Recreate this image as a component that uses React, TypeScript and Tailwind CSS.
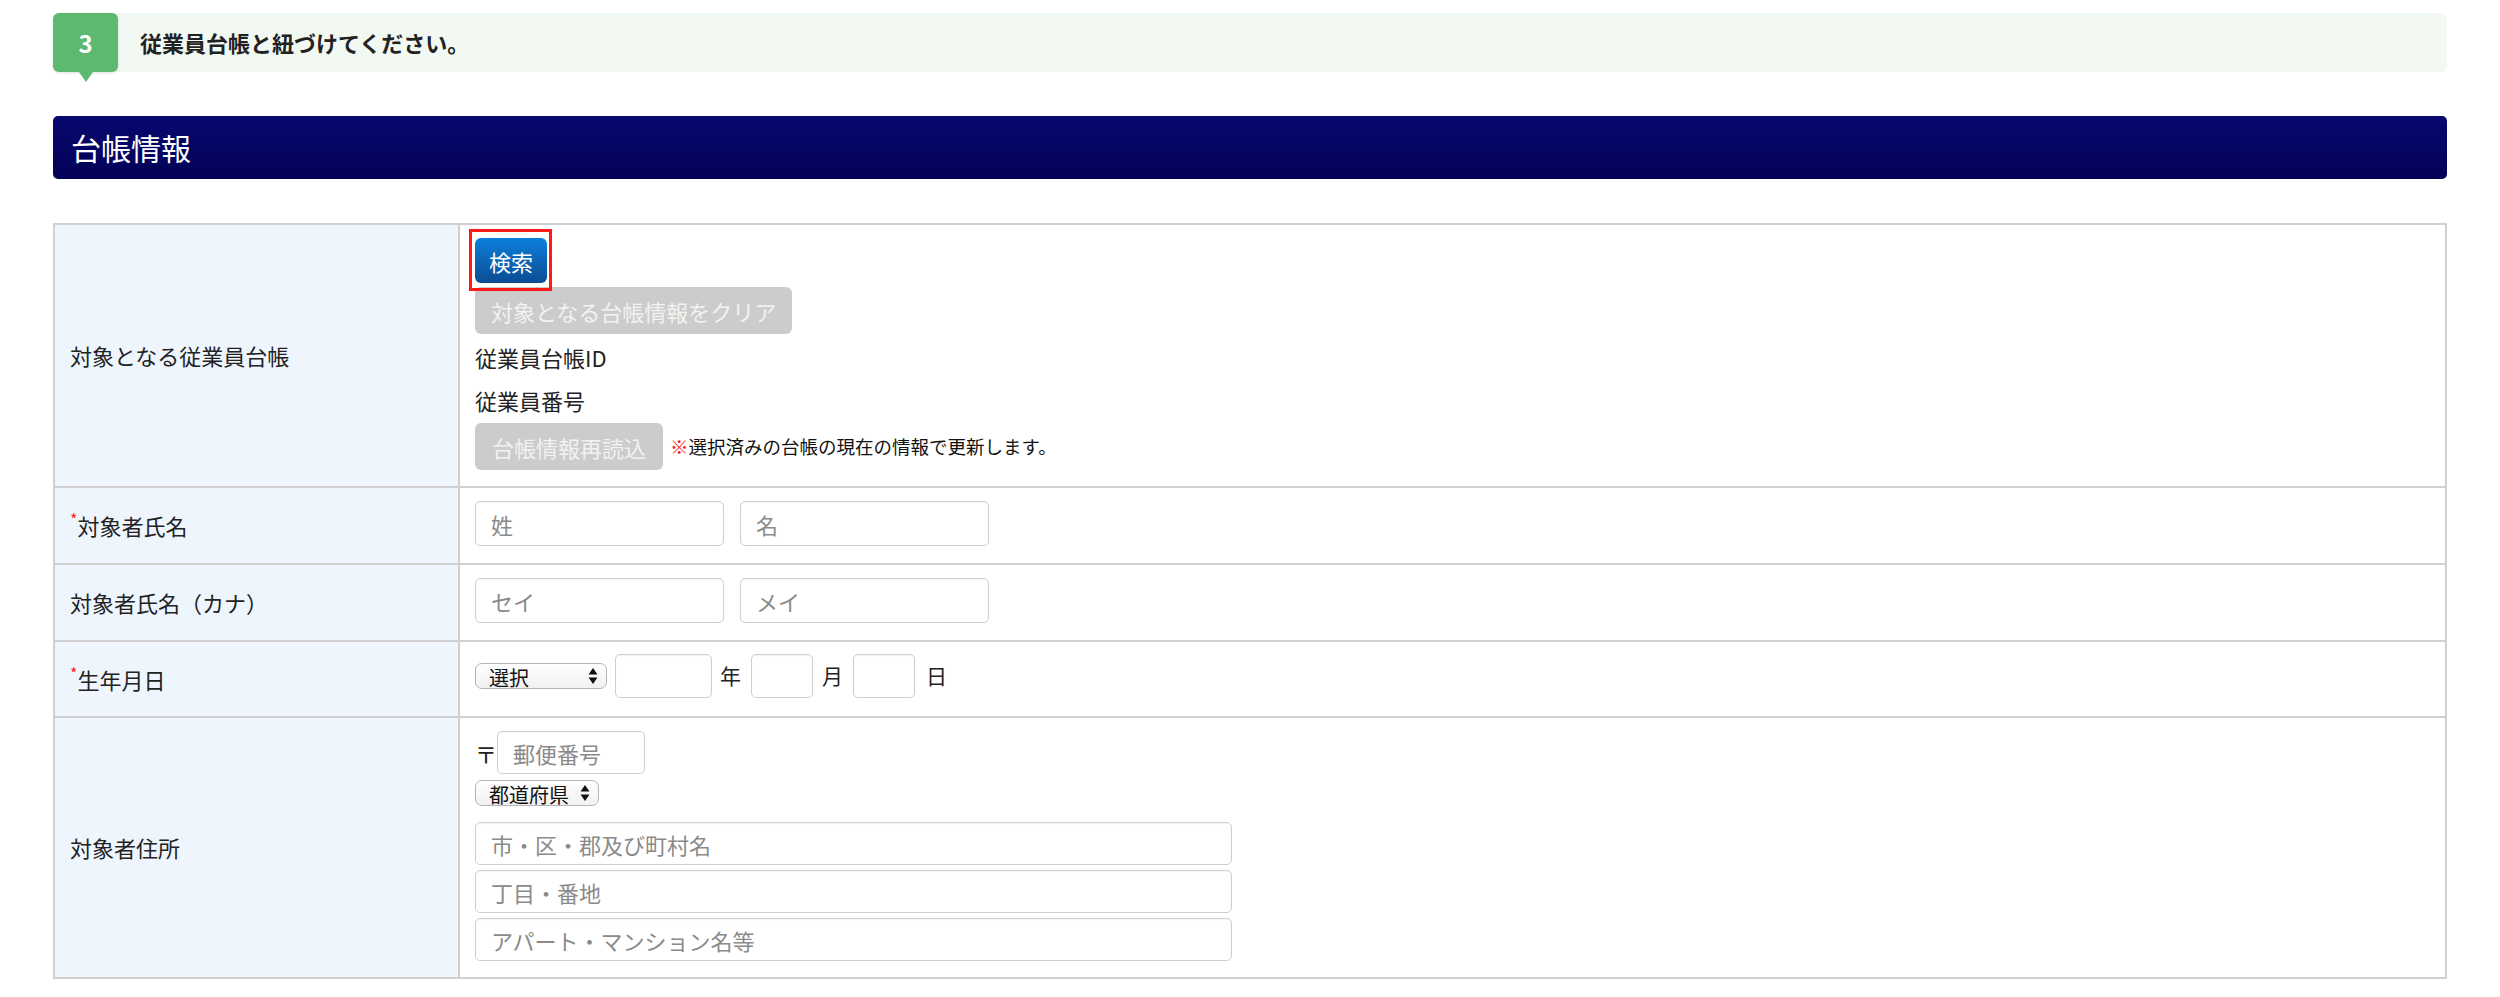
import React from "react";

const font = { fontFamily: '"Noto Sans CJK JP", "Noto Sans", sans-serif' };

function Arrows() {
  return (
    <svg width="10" height="18" viewBox="0 0 10 18" className="shrink-0">
      <polygon points="5,1 9.5,7.5 0.5,7.5" fill="#111" />
      <polygon points="5,17 9.5,10.5 0.5,10.5" fill="#111" />
    </svg>
  );
}

function FakeSelect({ label, w }: { label: string; w: string }) {
  return (
    <div
      className={`${w} h-[26px] rounded-[7px] border border-[#b5b5b5] bg-gradient-to-b from-[#ffffff] to-[#f1f1f1] flex items-center justify-between pl-[13px] pr-[8px]`}
    >
      <span className="text-[20px] leading-none pt-[3px] text-[#111] whitespace-nowrap">{label}</span>
      <Arrows />
    </div>
  );
}

function Input({ w, ph, h = "h-[45px]" }: { w: string; ph?: string; h?: string }) {
  return (
    <input
      placeholder={ph}
      className={`${w} ${h} rounded-[5px] border-[1.5px] border-[#cfcfcf] bg-white px-[15px] text-[22px] text-[#333] placeholder:text-[#8a8a8a] outline-none shadow-[inset_0_1px_1px_rgba(0,0,0,0.04)]`}
      style={font}
    />
  );
}

function Req() {
  return <span className="text-[#ff2020] text-[16px] align-top relative top-[-2px]">*</span>;
}

function Row({
  label,
  children,
  first,
  contentClass,
}: {
  label: React.ReactNode;
  children: React.ReactNode;
  first?: boolean;
  contentClass: string;
}) {
  return (
    <div className={`flex ${first ? "" : "border-t-2 border-[#d0d0d0]"}`}>
      <div className="w-[405px] shrink-0 bg-[#eef5fd] border-r-2 border-[#d0d0d0] flex items-center pl-[15px] text-[22px] text-[#222]">
        {label}
      </div>
      <div className={`flex-1 pl-[15px] ${contentClass}`}>{children}</div>
    </div>
  );
}

export default function App() {
  return (
    <div className="w-[2500px] min-h-[997px] bg-white pt-[13px] px-[53px] text-[#222]" style={font}>
      {/* Step bar */}
      <div className="h-[59px] flex items-center bg-[#f2f9f3] rounded-[6px]">
        <div className="relative w-[65px] h-full bg-[#5db96f] rounded-[6px] flex items-center justify-center text-white font-bold text-[24px] shadow-[0_1px_3px_rgba(0,0,0,0.12)]">
          3
          <div className="absolute left-1/2 -translate-x-1/2 top-full w-0 h-0 border-l-[7px] border-r-[7px] border-t-[10px] border-l-transparent border-r-transparent border-t-[#5db96f]" />
        </div>
        <div className="ml-[22px] font-bold text-[22px] text-[#222]">従業員台帳と紐づけてください。</div>
      </div>

      {/* Navy header */}
      <div className="mt-[44px] h-[63px] rounded-[5px] bg-gradient-to-b from-[#08086f] to-[#020257] flex items-center pl-[18px] text-white text-[30px]">
        台帳情報
      </div>

      {/* Table */}
      <div className="mt-[44px] border-2 border-[#d0d0d0]">
        <Row first label="対象となる従業員台帳" contentClass="pt-[13px] pb-[16px]">
          <div className="relative inline-block">
            <div className="absolute left-[-6px] right-[-5px] top-[-9px] bottom-[-8px] border-[3px] border-[#ff1a1a] pointer-events-none" />
            <button className="h-[45px] px-[14px] rounded-[6px] bg-gradient-to-b from-[#0b80dc] to-[#0b4d93] text-white text-[22px] leading-none">
              検索
            </button>
          </div>
          <div className="mt-[4px]">
            <button className="h-[47px] px-[16px] rounded-[6px] bg-[#cccccc] text-[#f2f2f2] text-[22px] leading-none">
              対象となる台帳情報をクリア
            </button>
          </div>
          <div className="mt-[2px] h-[43px] flex items-center text-[22px]">従業員台帳ID</div>
          <div className="h-[43px] flex items-center text-[22px]">従業員番号</div>
          <div className="mt-[1px] flex items-center">
            <button className="h-[47px] px-[17px] rounded-[6px] bg-[#cccccc] text-[#f2f2f2] text-[22px] leading-none">
              台帳情報再読込
            </button>
            <span className="ml-[7px] text-[18.5px] text-[#111]">
              <span className="text-[#ff1a1a]">※</span>選択済みの台帳の現在の情報で更新します。
            </span>
          </div>
        </Row>

        <Row
          label={
            <span>
              <Req />
              対象者氏名
            </span>
          }
          contentClass="pt-[13px] pb-[17px] flex gap-[16px]"
        >
          <Input w="w-[249px]" ph="姓" />
          <Input w="w-[249px]" ph="名" />
        </Row>

        <Row label="対象者氏名（カナ）" contentClass="pt-[13px] pb-[17px] flex gap-[16px]">
          <Input w="w-[249px]" ph="セイ" />
          <Input w="w-[249px]" ph="メイ" />
        </Row>

        <Row
          label={
            <span>
              <Req />
              生年月日
            </span>
          }
          contentClass="pt-[12px] pb-[18px] flex items-center"
        >
          <FakeSelect label="選択" w="w-[132px]" />
          <div className="ml-[8px]">
            <Input w="w-[97px]" h="h-[44px]" />
          </div>
          <span className="ml-[8px] text-[21px]">年</span>
          <div className="ml-[10px]">
            <Input w="w-[62px]" h="h-[44px]" />
          </div>
          <span className="ml-[9px] text-[21px]">月</span>
          <div className="ml-[10px]">
            <Input w="w-[62px]" h="h-[44px]" />
          </div>
          <span className="ml-[11px] text-[21px]">日</span>
        </Row>

        <Row label="対象者住所" contentClass="pt-[13px] pb-[16px] flex flex-col items-start">
          <div className="flex items-center">
            <span className="text-[22px] leading-none w-[22px]">〒</span>
            <Input w="w-[148px]" h="h-[43px]" ph="郵便番号" />
          </div>
          <div className="mt-[6px]">
            <FakeSelect label="都道府県" w="w-[124px]" />
          </div>
          <div className="mt-[16px]">
            <Input w="w-[757px]" h="h-[43px]" ph="市・区・郡及び町村名" />
          </div>
          <div className="mt-[5px]">
            <Input w="w-[757px]" h="h-[43px]" ph="丁目・番地" />
          </div>
          <div className="mt-[5px]">
            <Input w="w-[757px]" h="h-[43px]" ph="アパート・マンション名等" />
          </div>
        </Row>
      </div>
    </div>
  );
}
